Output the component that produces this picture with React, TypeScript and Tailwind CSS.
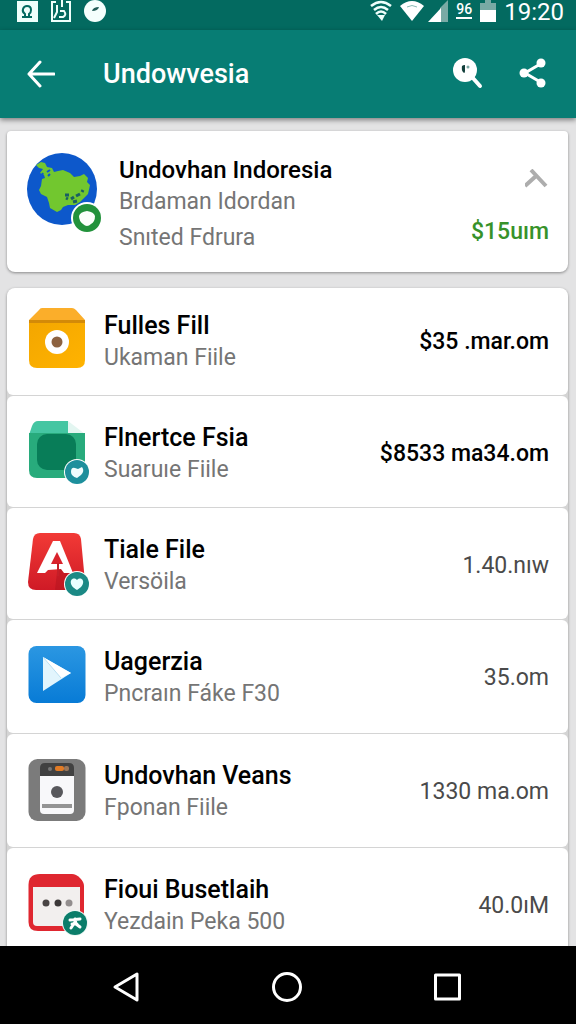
import React from 'react'

type Item = {
    title: string
    subtitle: string
    value: string
    strong?: boolean
    icon: React.ReactNode
}

const BoxIcon = () => (
    <svg viewBox="0 0 60 60" className="size-[60px] shrink-0 overflow-visible" aria-hidden="true">
        <defs>
            <linearGradient id="box" x1="0" y1="0" x2="1" y2="1">
                <stop offset="0" stopColor="#f3a600" />
                <stop offset="1" stopColor="#ffb300" />
            </linearGradient>
        </defs>
        <path d="M14 -1H44Q46 -1 48 1L57 11V15H1V11L11 1Q12 -1 14 -1Z" fill="#fbae2a" />
        <path d="M1 11H57V51Q57 59 49 59H9Q1 59 1 51Z" fill="url(#box)" />
        <path d="M1 11H57V14H1Z" fill="#d38a08" />
        <circle cx="29" cy="33" r="12" fill="#fff" />
        <circle cx="29" cy="33" r="5.5" fill="#8d6240" />
    </svg>
)

const FolderIcon = () => (
    <svg viewBox="0 0 60 60" className="size-[60px] shrink-0 overflow-visible" aria-hidden="true">
        <path d="M10 0H40V14H1L4 5Q6 0 10 0Z" fill="#45c6a2" />
        <path d="M40 0L57 13H40Z" fill="#e3f6f1" />
        <path d="M1 12H57V57H9Q1 57 1 49Z" fill="#28ab7c" />
        <rect x="9" y="13" width="39" height="36" rx="10" fill="#087d58" />
        <circle cx="49" cy="51" r="13" fill="#fff" />
        <circle cx="49" cy="51" r="12" fill="#1d8f9c" />
        <path d="M43 51Q43 46 47 47L50 48L54 46Q57 50 53 54L49 57Q43 55 43 51Z" fill="#effcfd" />
    </svg>
)

const LetterIcon = () => (
    <svg viewBox="0 0 60 60" className="size-[60px] shrink-0 overflow-visible" aria-hidden="true">
        <defs>
            <linearGradient id="letter" x1="0" y1="0" x2="0" y2="1">
                <stop offset="0" stopColor="#f23a36" />
                <stop offset="1" stopColor="#cf1a26" />
            </linearGradient>
        </defs>
        <path d="M12 0H46Q52 0 53 6L57 49Q57 57 49 57H8Q0 57 0 49L5 6Q6 0 12 0Z" fill="url(#letter)" />
        <path d="M30 31L44 42V57H27Z" fill="#b5141f" opacity=".55" />
        <path d="M25 8H32L45 40H36L33 36L20 37L17 40H9L24 10Z" fill="#fff" />
        <path d="M29 19L35 31H23Z" fill="#d9232c" />
        <path d="M30 30V43" stroke="#c41f28" strokeWidth="2" />
        <circle cx="49" cy="51" r="13" fill="#fff" />
        <circle cx="49" cy="51" r="12" fill="#1b8985" />
        <path d="M49 57C38 51 44 42 49 47C54 42 60 51 49 57Z" fill="#e9ffff" />
    </svg>
)

const PlayIcon = () => (
    <svg viewBox="0 0 60 60" className="size-[60px] shrink-0 overflow-visible" aria-hidden="true">
        <defs>
            <linearGradient id="play" x1="0" y1="0" x2="0" y2="1">
                <stop offset="0" stopColor="#2b97e2" />
                <stop offset="1" stopColor="#087bd6" />
            </linearGradient>
        </defs>
        <rect x="0.5" y="1" width="57" height="57" rx="8" fill="url(#play)" />
        <path d="M15 12V46L43 28Z" fill="#e2f5fd" />
        <path d="M15 12L43 28L33 33Z" fill="#fff" />
        <path d="M15 12L33 33" stroke="#b9dff2" strokeWidth="1" />
    </svg>
)

const DeviceIcon = () => (
    <svg viewBox="0 0 60 60" className="size-[60px] shrink-0 overflow-visible" aria-hidden="true">
        <rect x="0.5" y="0" width="57" height="62" rx="9" fill="#7b7b7b" />
        <path d="M12 9Q12 4 17 4H41Q46 4 46 9V17H12Z" fill="#414141" />
        <path d="M12 17H46V51Q46 55 42 55H16Q12 55 12 51Z" fill="#f8f8fa" />
        <circle cx="22" cy="10" r="2" fill="#777" />
        <rect x="27" y="7" width="9" height="5" rx="2" fill="#e27b25" />
        <rect x="36" y="7" width="5" height="5" rx="2" fill="#99775c" />
        <circle cx="29" cy="33" r="6" fill="#58585c" />
        <rect x="14" y="45" width="30" height="4" fill="#949494" />
    </svg>
)

const CalendarIcon = () => (
    <svg viewBox="0 0 60 60" className="size-[60px] shrink-0 overflow-visible" aria-hidden="true">
        <path d="M12 1H44Q48 1 52 5Q56 9 56 13V58H10Q0.500 58 0.500 49V12Q0.500 1 12 1Z" fill="#df2730" />
        <path d="M5 14H52V53H9Q5 53 5 49Z" fill="#f2efee" />
        <circle cx="18" cy="30" r="3.500" fill="#494444" />
        <circle cx="30" cy="30" r="3.500" fill="#3c3838" />
        <circle cx="41" cy="30" r="3.500" fill="#938e8e" />
        <circle cx="47" cy="50" r="13" fill="#eef7f5" />
        <circle cx="47" cy="50" r="12" fill="#0b7d6a" />
        <path d="M42 47L52 46M47 46L48 51L52 54M47 49L43 55M44 51H49" stroke="#fff" strokeWidth="3" fill="none" strokeLinejoin="round" strokeLinecap="round" />
    </svg>
)

const GlobeIcon = () => (
    <svg viewBox="0 0 76 82" className="h-[82px] w-[76px] shrink-0" aria-hidden="true">
        <ellipse cx="35" cy="36" rx="35" ry="36" fill="#0d58cb" />
        <path
            d="M9 12L14 9L18 10L20 14L25 15L27 19L31 18L36 17L43 20L47 24L53 23L57 21L61 25L60 29L63 32L61 41L56 46L53 49L48 52L41 52L36 54L34 57L30 59L23 55L22 50L20 44L14 41L12 37L14 33L15 26L18 25L17 22L13 20L16 16L12 15Z"
            fill="#72c72f"
        />
        <path d="M20 19L23 17M21 23L23 21M15 22L16 20" stroke="#0d58cb" strokeWidth="2" />
        <path d="M38 42H42M44 46L47 44M49 43L53 41M55 39L56 37M39 45L41 46M46 49L50 48" stroke="#1a5f63" strokeWidth="3" fill="none" />
        <circle cx="60" cy="65" r="16" fill="#fff" />
        <circle cx="60" cy="65" r="14" fill="#22923b" />
        <path d="M52 63Q53 59 60 58Q67 59 68 63Q68 69 64 71Q60 75 56 71Q52 68 52 63Z" fill="#fbfffb" />
    </svg>
)

const items: Item[] = [
    { title: 'Fulles Fill', subtitle: 'Ukaman Fiile', value: '$35 .mar.om', strong: true, icon: <BoxIcon /> },
    { title: 'Flnertce Fsia', subtitle: 'Suaruıe Fiile', value: '$8533 ma34.om', strong: true, icon: <FolderIcon /> },
    { title: 'Tiale File', subtitle: 'Versöila', value: '1.40.nıw', icon: <LetterIcon /> },
    { title: 'Uagerzia', subtitle: 'Pncraın Fáke F30', value: '35.om', icon: <PlayIcon /> },
    { title: 'Undovhan Veans', subtitle: 'Fponan Fiile', value: '1330 ma.om', icon: <DeviceIcon /> },
    { title: 'Fioui Busetlaih', subtitle: 'Yezdain Peka 500', value: '40.0ıM', icon: <CalendarIcon /> },
]

const StatusBar = () => (
    <div className="flex h-[30px] shrink-0 items-start justify-between bg-[#036a60] pr-3 pl-4 text-white">
        <div className="flex gap-3">
            <svg viewBox="0 0 22 22" className="h-[22px] w-[22px]" aria-hidden="true">
                <path d="M1 1H22V22H1Z" fill="#effffb" />
                <path d="M6 17H16M9 16V14Q6 12 7 9Q8 6 11 6Q15 6 15 10Q15 13 13 14V16" fill="none" stroke="#036a60" strokeWidth="2" />
            </svg>
            <svg viewBox="0 0 22 22" className="h-[22px] w-[22px]" aria-hidden="true">
                <path d="M6 2H2V21H20V2H16" fill="none" stroke="#effffb" strokeWidth="2" />
                <path d="M7 5V12L4 18M12 0V7M10 11H14Q17 15 13 17H9" fill="none" stroke="#effffb" strokeWidth="2" />
            </svg>
            <svg viewBox="0 0 22 22" className="h-[22px] w-[22px]" aria-hidden="true">
                <circle cx="11" cy="11" r="11" fill="#f5fffd" />
                <path d="M8 11Q9 7 15 7Q14 11 8 11Z" fill="#245d58" />
            </svg>
        </div>
        <div className="flex gap-2">
            <svg viewBox="0 0 22 22" className="h-[22px] w-[22px]" aria-hidden="true">
                <path d="M1 6Q11 -2 21 6M4 10Q11 4 18 10M6 14Q11 9 16 14" fill="none" stroke="#eefffc" strokeWidth="2.500" />
                <path d="M7 15H15L12 21Z" fill="#eefffc" />
            </svg>
            <svg viewBox="0 0 24 22" className="h-[22px] w-6" aria-hidden="true">
                <path d="M0 6Q12 -4 24 6L12 21Z" fill="#fff" />
                <path d="M7 7Q12 4 17 7" fill="none" stroke="#8abbb5" strokeWidth="1" />
            </svg>
            <svg viewBox="0 0 20 22" className="-ml-1 h-[22px] w-5" aria-hidden="true">
                <path d="M20 0V22H12V8Z" fill="#79aaa5" />
                <path d="M13 8V22H0Z" fill="#fff" />
            </svg>
            <span className="mt-px h-[18px] border-b-2 border-white text-sm leading-4 font-medium">96</span>
            <svg viewBox="0 0 16 22" className="h-[22px] w-4" aria-hidden="true">
                <path d="M5 0H11V3H16V10H0V3H5Z" fill="#79aaa5" />
                <path d="M0 10H16V22H0Z" fill="#fff" />
            </svg>
            <span className="text-2xl leading-6">19:20</span>
        </div>
    </div>
)

const AppBar = () => (
    <header className="z-10 flex h-[88px] shrink-0 items-center bg-[#077d74] px-[27px] text-white shadow-[0_2px_5px_rgba(0,0,0,0.45)]">
        <button type="button" aria-label="Back">
            <svg viewBox="0 0 28 28" className="size-7" fill="none" stroke="currentColor" strokeWidth="3" strokeLinecap="round" strokeLinejoin="round" aria-hidden="true">
                <path d="M13 2L2 14L13 26M2 14H27" />
            </svg>
        </button>
        <h1 className="ml-12 flex-1 text-[27px] leading-9 font-medium">Undowvesia</h1>
        <button type="button" aria-label="Search">
            <svg viewBox="0 0 32 32" className="size-8" aria-hidden="true">
                <circle cx="14" cy="12" r="12" fill="#fff" />
                <path d="M21 19L29 28" stroke="#fff" strokeWidth="4" strokeLinecap="round" />
                <path d="M11 8Q12 7 14 7V13Q14 15 13 15Q10 13 11 8Z" fill="#123f3b" />
                <circle cx="17" cy="9" r="1.500" fill="#7ba8a4" />
            </svg>
        </button>
        <button type="button" aria-label="Share" className="ml-9">
            <svg viewBox="0 0 30 32" className="h-8 w-[30px]" aria-hidden="true">
                <path d="M23 5L6 15L23 25" stroke="#fff" strokeWidth="3" fill="none" />
                <circle cx="22" cy="5" r="4.500" fill="#fff" />
                <circle cx="5" cy="15" r="4.500" fill="#fff" />
                <circle cx="22" cy="25" r="4.500" fill="#fff" />
            </svg>
        </button>
    </header>
)

const FeaturedCard = () => (
    <section className="flex rounded-t-sm rounded-b-lg bg-white pt-[22px] pr-[19px] pb-[18px] pl-5 shadow-[0_1px_3px_rgba(0,0,0,0.4)]">
        <GlobeIcon />
        <div className="ml-4 min-w-0 flex-1 pt-px">
            <h2 className="text-2xl leading-8 font-medium text-black">Undovhan Indoresia</h2>
            <p className="text-[23px] leading-8 text-[#757575]">Brdaman Idordan</p>
            <p className="mt-1 text-[23px] leading-8 text-[#757575]">Snıted Fdrura</p>
        </div>
        <div className="flex flex-col items-end justify-between pt-4">
            <button type="button" aria-label="Collapse">
                <svg viewBox="0 0 24 20" className="h-5 w-6" fill="none" stroke="#adadad" strokeWidth="4" aria-hidden="true">
                    <path d="M6 1L21 17M11 7L0 17" />
                </svg>
            </button>
            <span className="mb-1.5 text-[23px] leading-8 font-medium text-[#37922a]">$15uım</span>
        </div>
    </section>
)

const ItemRow = ({ title, subtitle, value, strong, icon }: Item) => (
    <li className="flex gap-4 rounded-md bg-white pt-[25px] pr-[19px] pb-[21px] pl-[21px] first:rounded-t-lg first:pt-[21px] nth-[n+4]:pb-[23px]">
        {icon}
        <div className="min-w-0 flex-1 pt-px">
            <h3 className="text-[25px] leading-8 font-medium text-black">{title}</h3>
            <p className="text-[23px] leading-8 text-[#757575]">{subtitle}</p>
        </div>
        <span className={strong ? 'self-center text-[23px] leading-8 font-medium text-black' : 'self-center text-[23px] leading-8 text-[#4a4a4a]'}>
            {value}
        </span>
    </li>
)

const NavBar = () => (
    <nav className="flex h-[78px] shrink-0 items-center justify-around bg-black px-[46px] pt-1 text-white">
        <button type="button" aria-label="Back">
            <svg viewBox="0 0 32 32" className="size-8" fill="none" stroke="currentColor" strokeWidth="3" strokeLinejoin="round" aria-hidden="true">
                <path d="M26 3V29L4 16Z" />
            </svg>
        </button>
        <button type="button" aria-label="Home">
            <svg viewBox="0 0 32 32" className="size-8" fill="none" stroke="currentColor" strokeWidth="3" aria-hidden="true">
                <circle cx="15" cy="16" r="13.500" />
            </svg>
        </button>
        <button type="button" aria-label="Recent apps">
            <svg viewBox="0 0 32 32" className="size-8" fill="none" stroke="currentColor" strokeWidth="3" strokeLinejoin="round" aria-hidden="true">
                <rect x="2.500" y="4" width="24" height="24" />
            </svg>
        </button>
    </nav>
)

const App = () => {
    return (
        <div className="flex h-screen flex-col bg-[#e3e3e4] font-[Roboto,sans-serif]">
            <StatusBar />
            <AppBar />
            <main className="flex-1 overflow-y-auto pt-[13px] pr-2 pl-[7px] [scrollbar-width:none]">
                <FeaturedCard />
                <ul className="mt-4 flex flex-col gap-px rounded-lg bg-[#d4d4d4] shadow-[0_1px_3px_rgba(0,0,0,0.4)]">
                    {items.map((item) => (
                        <ItemRow key={item.title} {...item} />
                    ))}
                </ul>
            </main>
            <NavBar />
        </div>
    )
}

export default App
